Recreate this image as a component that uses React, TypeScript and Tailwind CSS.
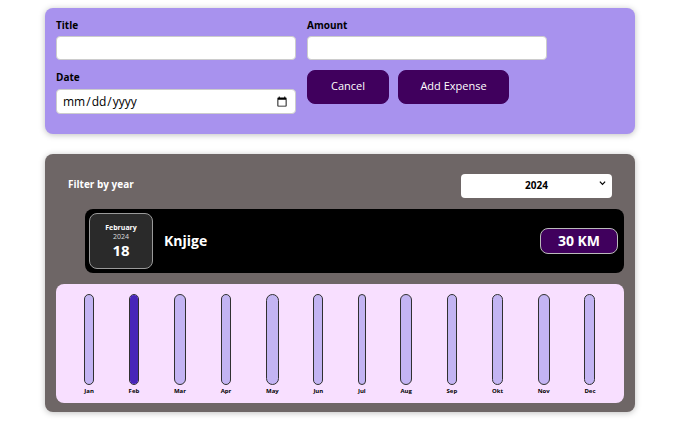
import { useState } from 'react';

const months = ['Jan', 'Feb', 'Mar', 'Apr', 'May', 'Jun', 'Jul', 'Aug', 'Sep', 'Okt', 'Nov', 'Dec'];
const values = [0, 30, 0, 0, 0, 0, 0, 0, 0, 0, 0, 0];

export default function App() {
  const [year, setYear] = useState('2024');
  const max = Math.max(...values);

  return (
    <div className="min-h-screen bg-white pt-[8px] font-['Open_Sans',sans-serif]">
      {/* new expense form */}
      <div className="mx-auto w-[590px] rounded-[8px] bg-[#a892ee] px-[11px] pt-[9px] pb-[20px] shadow-[0_1px_6px_rgba(0,0,0,0.25)]">
        <div className="flex flex-wrap gap-x-[11px] gap-y-[9px]">
          <div className="w-[240px]">
            <label className="mb-[1px] block text-[10px] leading-[16px] font-bold text-black">Title</label>
            <input type="text" className="h-[24px] w-full rounded-[4px] border border-[#ccc] bg-white px-[5px] text-[11px]" />
          </div>
          <div className="w-[240px]">
            <label className="mb-[1px] block text-[10px] leading-[16px] font-bold text-black">Amount</label>
            <input type="number" className="h-[24px] w-full rounded-[4px] border border-[#ccc] bg-white px-[5px] text-[11px]" />
          </div>
          <div className="w-[240px]">
            <label className="mb-[3px] block text-[10px] leading-[16px] font-bold text-black">Date</label>
            <input type="date" className="h-[25px] w-full rounded-[4px] border border-[#ccc] bg-white px-[5px] text-[12px] text-black" />
          </div>
          <div className="flex gap-[9px] pt-[1px]">
            <button className="h-[34px] w-[82px] rounded-[8px] border border-[#40005d] bg-[#40005d] text-[11px] text-white">Cancel</button>
            <button className="h-[34px] w-[111px] rounded-[8px] border border-[#40005d] bg-[#40005d] text-[11px] text-white">Add Expense</button>
          </div>
        </div>
      </div>

      {/* expenses */}
      <div className="mx-auto mt-[20px] w-[590px] rounded-[8px] bg-[#6e6666] px-[11px] pt-[17px] pb-[9px] shadow-[0_1px_6px_rgba(0,0,0,0.25)]">
        <div className="flex items-center justify-between px-[12px]">
          <span className="text-[10px] font-bold text-white">Filter by year</span>
          <div className="relative w-[151px]">
            <select
              value={year}
              onChange={(e) => setYear(e.target.value)}
              className="h-[24px] w-full appearance-none rounded-[4px] bg-white text-center text-[10px] font-bold text-black"
            >
              <option value="2022">2022</option>
              <option value="2023">2023</option>
              <option value="2024">2024</option>
              <option value="2025">2025</option>
            </select>
            <svg className="pointer-events-none absolute top-[9px] right-[6px] h-[6px] w-[7px]" viewBox="0 0 8 6" fill="none" stroke="#000" strokeWidth={1.4}>
              <path d="M1 1.5l3 3 3-3" />
            </svg>
          </div>
        </div>

        <div className="mt-[11px] pl-[29px]">
          <div className="flex items-center rounded-[8px] bg-black p-[4px] pr-[6px]">
            <div className="flex h-[56px] w-[64px] flex-col items-center justify-center rounded-[8px] border border-[#9a9a9a] bg-[#2a2a2a] text-white">
              <div className="text-[7px] leading-[9px] font-bold">February</div>
              <div className="text-[7px] leading-[9px] text-[#ddd]">2024</div>
              <div className="text-[15px] leading-[18px] font-bold">18</div>
            </div>
            <h2 className="ml-[11px] flex-1 text-[14px] font-bold text-white">Knjige</h2>
            <div className="flex h-[26px] w-[78px] items-center justify-center rounded-[8px] border border-[#bbb] bg-[#40005d] text-[14px] font-bold text-white">
              30 KM
            </div>
          </div>
        </div>

        <div className="mt-[11px] flex h-[119px] justify-around rounded-[8px] bg-[#f8dfff] px-[11px] pt-[10px] pb-[8px]">
          {months.map((m, i) => {
            const fill = max > 0 ? Math.round((values[i] / max) * 100) + '%' : '0%';
            return (
              <div key={m} className="flex h-full flex-col items-center">
                <div className="flex w-full flex-1 flex-col justify-end overflow-hidden rounded-full border border-[#313131] bg-[#c3b4f3]">
                  <div className="w-full bg-[#4826b9]" style={{ height: fill }} />
                </div>
                <div className="mt-[2px] text-[6px] leading-[8px] font-bold text-black">{m}</div>
              </div>
            );
          })}
        </div>
      </div>
    </div>
  );
}
